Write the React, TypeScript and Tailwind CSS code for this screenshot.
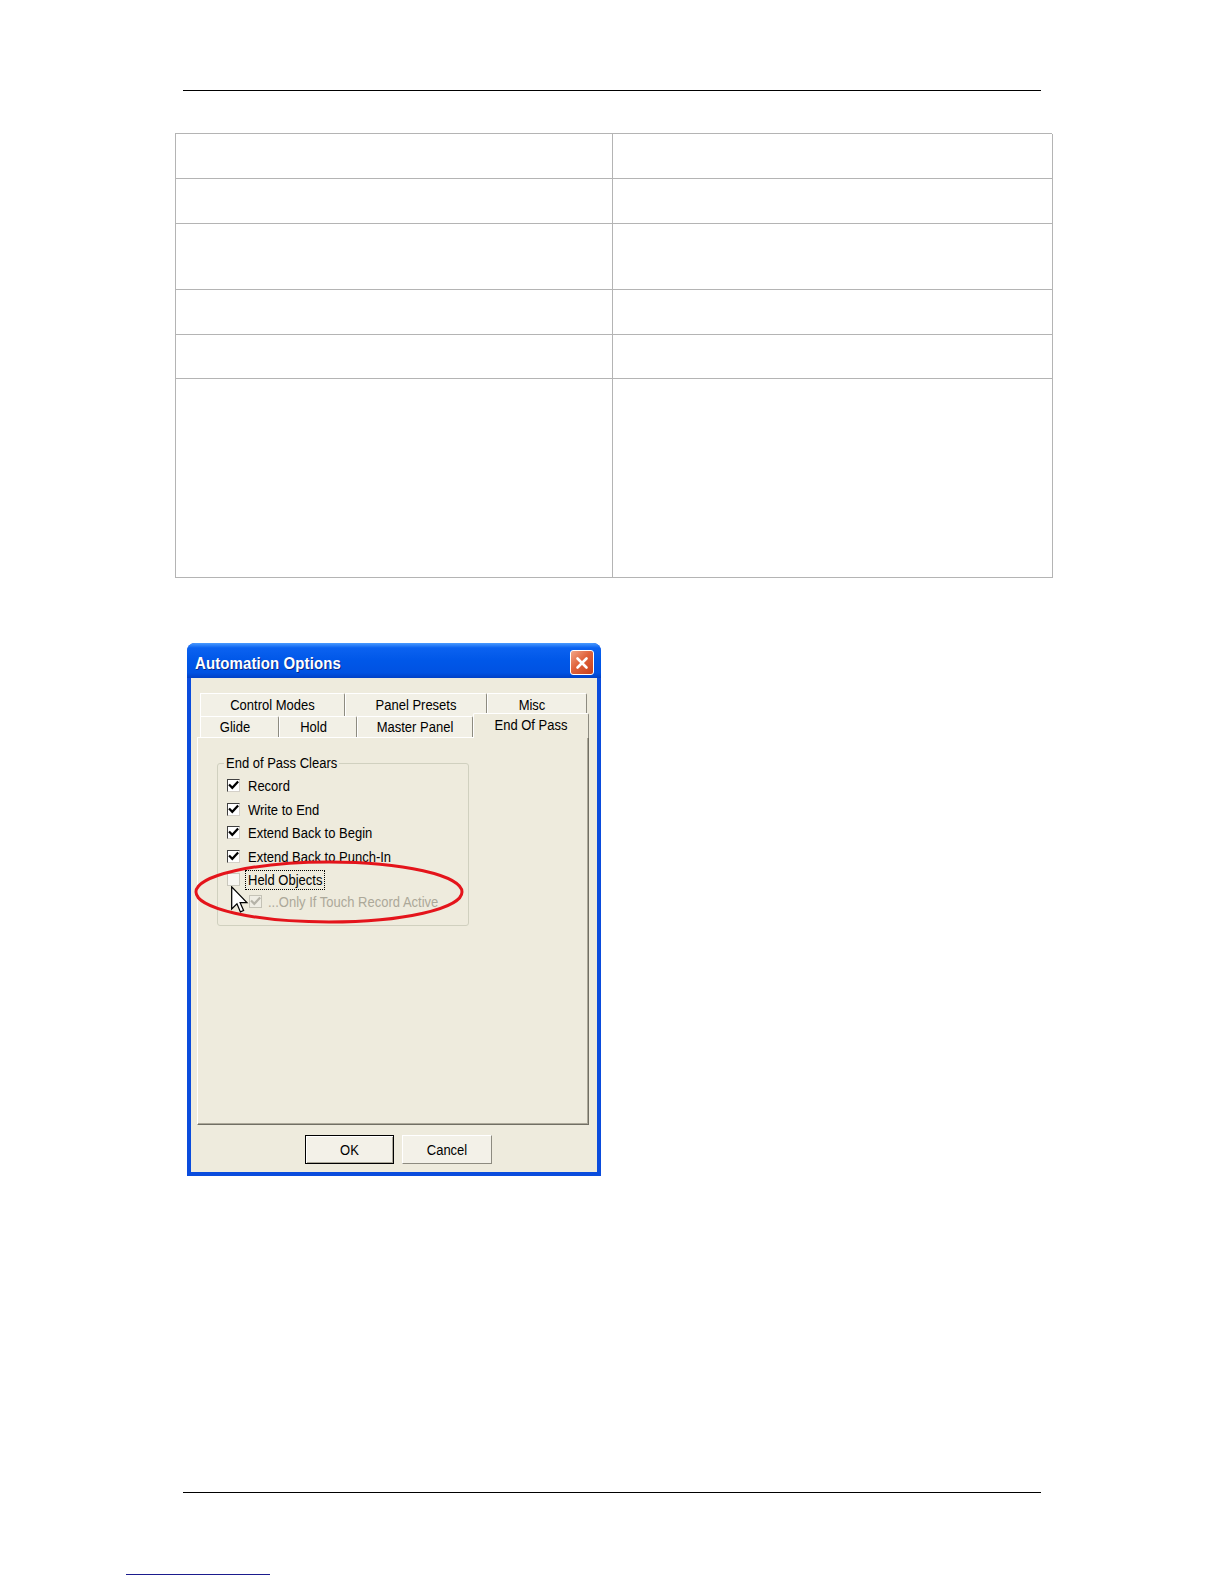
import React from 'react'

// table rows: heights in px (cell box incl. bottom border)
const rows = [45, 45, 66, 45, 44, 199]

const topTabs = [
  { label: 'Control Modes', w: 145, shift: '' },
  { label: 'Panel Presets', w: 142, shift: '' },
  { label: 'Misc', w: 100, shift: 'pr-[10px]' },
]

const bottomTabs = [
  { label: 'Glide', w: 79, shift: 'pr-[9px]' },
  { label: 'Hold', w: 78, shift: 'pr-[9px]' },
  { label: 'Master Panel', w: 116, shift: '' },
]

const clears = ['Record', 'Write to End', 'Extend Back to Begin', 'Extend Back to Punch-In']

// the screenshot's text is a little stretched vertically
function Txt({ children, className = '' }: { children: React.ReactNode; className?: string }) {
  return <span className={`inline-block scale-y-[1.18] ${className}`}>{children}</span>
}

function CheckBox({ state }: { state: 'on' | 'off' | 'dim' }) {
  if (state === 'off') {
    return <span className="block w-[13px] h-[13px] shrink-0 border border-[#c9c7bc] bg-[#f7f6f1]" />
  }
  const dim = state === 'dim'
  return (
    <span
      className={`flex items-center justify-center w-[13px] h-[13px] shrink-0 border ${
        dim
          ? 'border-[#c4c2b6] bg-[#efede4]'
          : 'border-t-[#404040] border-l-[#404040] border-r-[#d4d0c8] border-b-[#d4d0c8] bg-white'
      }`}
    >
      <svg width="11" height="11" viewBox="0 0 11 11">
        <path
          d="M1.8 5.2 L4.3 7.8 L9.4 2.2"
          fill="none"
          stroke={dim ? '#b5b3a8' : '#000'}
          strokeWidth="2.2"
          strokeLinecap="square"
        />
      </svg>
    </span>
  )
}

function DataTable() {
  return (
    <div className="ml-[175px] mt-[42px] w-[877px] grid grid-cols-[437px_440px] border-l border-t border-[#b4b4b4]">
      {rows.map((h, i) => (
        <React.Fragment key={i}>
          <div className="border-r border-b border-[#b4b4b4]" style={{ height: h }} />
          <div className="border-r border-b border-[#b4b4b4]" style={{ height: h }} />
        </React.Fragment>
      ))}
    </div>
  )
}

function AutomationDialog() {
  return (
    <div className="relative ml-[187px] mt-[65px] w-[414px] h-[533px] rounded-t-[8px] bg-[#0A4CDD] flex flex-col">
      {/* title bar */}
      <div className="h-[35px] shrink-0 rounded-t-[8px] flex items-start justify-between pl-[8px] pr-[7px] bg-[linear-gradient(to_bottom,#4A9BFF_0%,#0B62F0_14%,#0057E8_50%,#0052E2_85%,#0040C6_100%)]">
        <span className="mt-[11px] inline-block scale-y-[1.15] leading-[18px] text-[15px] font-bold text-white tracking-[0.1px] [text-shadow:1px_1px_0_#0A2A8A]">
          Automation Options
        </span>
        <span className="mt-[7px] flex items-center justify-center w-[24px] h-[25px] rounded-[3px] border border-white bg-[linear-gradient(135deg,#F2A688_0%,#E0633B_45%,#C8401C_100%)]">
          <svg width="14" height="14" viewBox="0 0 14 14">
            <path d="M2.5 2.5 L11.5 11.5 M11.5 2.5 L2.5 11.5" stroke="#fff" strokeWidth="2.6" strokeLinecap="round" />
          </svg>
        </span>
      </div>

      {/* body */}
      <div className="flex-1 mx-[4px] mb-[4px] bg-[#EEEBDD] pt-[15px] pl-[6px] text-[13px] text-black">
        <div className="flex ml-[3px] h-[23px]">
          {topTabs.map(t => (
            <div
              key={t.label}
              className={`flex items-center justify-center h-[23px] border-t border-l border-white border-r border-r-[#8d8b80] rounded-tr-[2px] bg-[#F2F0E6] ${t.shift}`}
              style={{ width: t.w }}
            >
              <Txt>{t.label}</Txt>
            </div>
          ))}
        </div>
        <div className="flex items-end ml-[3px] -mt-[3px] h-[24px]">
          {bottomTabs.map(t => (
            <div
              key={t.label}
              className={`flex items-center justify-center h-[21px] border-t border-l border-white border-r border-r-[#8d8b80] rounded-tr-[2px] bg-[#F2F0E6] ${t.shift}`}
              style={{ width: t.w }}
            >
              <Txt>{t.label}</Txt>
            </div>
          ))}
          <div className="relative z-10 -mb-[1px] flex items-center justify-center w-[116px] h-[25px] pb-[2px] border-t border-l border-white border-r border-r-[#8d8b80] rounded-t-[2px] bg-[#EEEBDD]">
            <Txt>End Of Pass</Txt>
          </div>
        </div>

        {/* tab panel */}
        <div className="w-[392px] h-[388px] border border-white border-r-[#716F64] border-b-[#716F64] shadow-[inset_-1px_-1px_0_#ACA899] pt-[25px] pl-[19px]">
          <div className="relative w-[252px] h-[163px] border border-[#D0D0BF] rounded-[3px] pt-[10px]">
            <span className="absolute -top-[9px] left-[6px] px-[2px] bg-[#EEEBDD] leading-[16px]">
              <Txt>End of Pass Clears</Txt>
            </span>
            {clears.map(label => (
              <div key={label} className="flex items-center h-[23.5px] pl-[9px] gap-[8px]">
                <CheckBox state="on" />
                <Txt>{label}</Txt>
              </div>
            ))}
            <div className="flex items-center h-[23.5px] pl-[9px] gap-[5px]">
              <CheckBox state="off" />
              <span className="border border-dotted border-black px-[2px] leading-[18px]">
                <Txt>Held Objects</Txt>
              </span>
            </div>
            <div className="flex items-center h-[20px] pl-[31px] gap-[6px] text-[#ACA899]">
              <CheckBox state="dim" />
              <Txt>...Only If Touch Record Active</Txt>
            </div>
          </div>
        </div>

        {/* buttons */}
        <div className="flex mt-[10px] ml-[108px] gap-[8px]">
          <button className="w-[89px] h-[29px] border border-black bg-[#F3F1E8] shadow-[inset_1px_1px_0_#fff,inset_-1px_-1px_0_#ACA899]">
            <Txt>OK</Txt>
          </button>
          <button className="w-[90px] h-[29px] border border-white border-r-[#8d8b80] border-b-[#8d8b80] bg-[#F3F1E8]">
            <Txt>Cancel</Txt>
          </button>
        </div>
      </div>

      {/* red highlight ellipse */}
      <svg className="absolute left-[6px] top-[216px]" width="272" height="66" viewBox="0 0 272 66">
        <ellipse cx="136" cy="33" rx="133" ry="30" fill="none" stroke="#E4141B" strokeWidth="3" />
      </svg>

      {/* mouse cursor */}
      <svg className="absolute left-[44px] top-[243px]" width="18" height="28" viewBox="0 0 13 20">
        <path
          d="M0.5 0.5 L0.5 16.5 L4.3 12.8 L6.8 18.6 L9.1 17.6 L6.6 11.9 L11.5 11.9 Z"
          fill="#fff"
          stroke="#000"
          strokeWidth="0.9"
          strokeLinejoin="miter"
        />
      </svg>
    </div>
  )
}

export default function App() {
  return (
    <div className="w-[1224px] h-[1584px] bg-white overflow-hidden font-['Liberation_Sans',Arial,sans-serif]">
      <div className="pt-[90px]">
        <div className="ml-[183px] w-[858px] h-px bg-black" />
        <DataTable />
        <AutomationDialog />
        <div className="ml-[183px] mt-[316px] w-[858px] h-px bg-black" />
        <div className="ml-[126px] mt-[81px] w-[144px] h-px bg-[#1B1B8E]" />
      </div>
    </div>
  )
}
